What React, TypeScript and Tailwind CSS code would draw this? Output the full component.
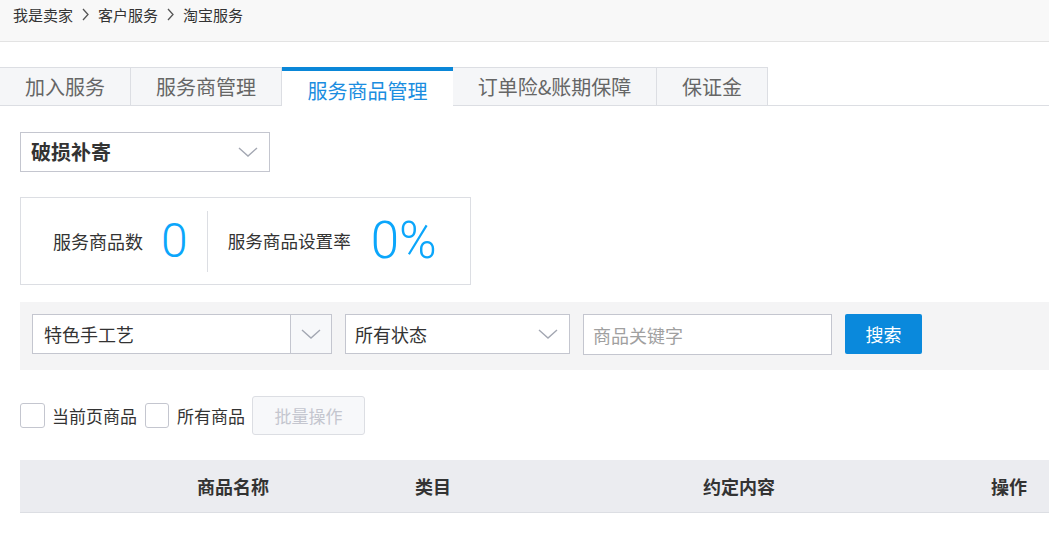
import React from "react";

const FONT = '"Noto Sans CJK SC", "Liberation Sans", sans-serif';

function Chevron({ className = "" }: { className?: string }) {
  return (
    <svg className={className} width="20" height="10" viewBox="0 0 20 10" fill="none">
      <polyline points="1,1 10,9 19,1" stroke="#a3a7b2" strokeWidth="1.4" />
    </svg>
  );
}

function Crumb() {
  return (
    <svg className="mx-[9px]" width="7" height="13" viewBox="0 0 7 13" fill="none">
      <polyline points="1,1 6,6.5 1,12" stroke="#555" strokeWidth="1.3" />
    </svg>
  );
}

const tabs = [
  { label: "加入服务", w: "w-[131px]" },
  { label: "服务商管理", w: "w-[151px]" },
  { label: "服务商品管理", w: "w-[171px]", active: true },
  { label: "订单险&账期保障", w: "w-[204px]" },
  { label: "保证金", w: "w-[111px]" },
];

export default function App() {
  return (
    <div className="w-full min-h-[535px] overflow-hidden bg-white text-[#333]" style={{ fontFamily: FONT }}>
      {/* Breadcrumb */}
      <div className="h-[42px] bg-[#f8f8f8] border-b border-[#e3e3e3] pl-[13px] pt-[4px]">
        <div className="flex items-center h-[21px] text-[15px] leading-[21px] text-[#333]">
          <span>我是卖家</span>
          <Crumb />
          <span>客户服务</span>
          <Crumb />
          <span>淘宝服务</span>
        </div>
      </div>

      {/* Tabs */}
      <div className="mt-[25px] h-[39px] flex items-start border-b border-[#dcdee3]">
        {tabs.map((t) =>
          t.active ? (
            <div
              key={t.label}
              className={`${t.w} h-[40px] shrink-0 bg-white border-t-[4px] border-[#0a87d8] flex items-center justify-center pt-[3px] text-[20px] leading-[24px] text-[#1b8de0] relative z-10`}
            >
              {t.label}
            </div>
          ) : (
            <div
              key={t.label}
              className={`${t.w} h-[39px] shrink-0 bg-[#f5f6f8] border-t border-r border-b border-[#dcdee3] flex items-center justify-center text-[20px] leading-[24px] text-[#666]`}
            >
              {t.label}
            </div>
          )
        )}
      </div>

      <div className="pl-[20px]">
        {/* Type select */}
        <div className="mt-[26px] w-[250px] h-[40px] border border-[#c4c6cf] flex items-center justify-between pl-[10px] pr-[11px]">
          <span className="text-[20px] leading-[24px] font-bold text-[#333]">破损补寄</span>
          <Chevron />
        </div>

        {/* Stats */}
        <div className="mt-[25px] w-[451px] h-[88px] border border-[#dcdee3] flex items-center pl-[32px]">
          <span className="text-[18px] leading-[24px] text-[#333]">服务商品数</span>
          <span
            className="ml-[18px] text-[48px] leading-[50px] text-[#0ba6fb] font-light"
            style={{ fontFamily: '"Roboto", "Liberation Sans", sans-serif' }}
          >
            0
          </span>
          <div className="ml-[19px] w-px h-[61px] bg-[#dcdee3]" />
          <span className="ml-[20px] text-[17.6px] leading-[24px] text-[#333]">服务商品设置率</span>
          <span
            className="ml-[20px] text-[51px] leading-[52px] text-[#0ba6fb] font-light"
            style={{ fontFamily: '"Roboto", "Liberation Sans", sans-serif' }}
          >
            0%
          </span>
        </div>

        {/* Filter bar */}
        <div className="mt-[17px] h-[68px] bg-[#f4f4f5] flex items-start pt-[12px] pl-[12px] gap-[13px]">
          <div className="w-[300px] h-[40px] bg-white border border-[#c4c6cf] flex items-stretch">
            <div className="flex-1 flex items-center pl-[11px] text-[18px] leading-[24px] text-[#333]">特色手工艺</div>
            <div className="w-[41px] bg-[#f7f8fa] border-l border-[#c4c6cf] flex items-center justify-center">
              <Chevron />
            </div>
          </div>
          <div className="w-[225px] h-[40px] bg-white border border-[#c4c6cf] flex items-center justify-between pl-[9px] pr-[11px]">
            <span className="text-[18px] leading-[24px] text-[#333]">所有状态</span>
            <Chevron />
          </div>
          <div className="w-[249px] h-[41px] bg-white border border-[#c4c6cf] flex items-center pl-[9px]">
            <span className="text-[18px] leading-[24px] text-[#a0a0a0]">商品关键字</span>
          </div>
          <button className="w-[77px] h-[40px] bg-[#0a89dc] rounded-[2px] text-white text-[18px] leading-[24px]">
            搜索
          </button>
        </div>

        {/* Bulk row */}
        <div className="mt-[26px] h-[39px] flex items-center">
          <div className="w-[25px] h-[25px] bg-white border border-[#c4c6cf] rounded-[3px]" />
          <span className="ml-[7px] text-[17px] leading-[24px] text-[#333]">当前页商品</span>
          <div className="ml-[8px] w-[24px] h-[25px] bg-white border border-[#c4c6cf] rounded-[3px]" />
          <span className="ml-[8px] text-[17px] leading-[24px] text-[#333]">所有商品</span>
          <div className="ml-[7px] w-[113px] h-[39px] bg-[#f7f8fa] border border-[#dcdee3] rounded-[3px] flex items-center justify-center text-[17px] leading-[24px] text-[#c4c6cf]">
            批量操作
          </div>
        </div>

        {/* Table header */}
        <div className="mt-[25px] h-[53px] bg-[#ebecf0] border-b border-[#dcdee3] grid grid-cols-[177px_218px_288px_288px_1fr] items-center text-[18px] leading-[24px] font-bold text-[#333]">
          <span />
          <span>商品名称</span>
          <span>类目</span>
          <span>约定内容</span>
          <span>操作</span>
        </div>
      </div>
    </div>
  );
}
